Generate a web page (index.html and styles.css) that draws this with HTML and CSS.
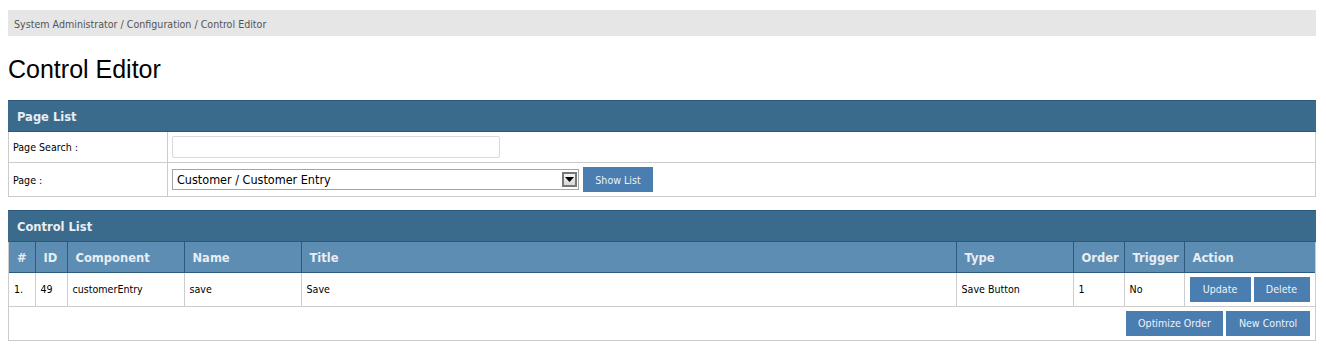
FILE: index.html
```html
<!DOCTYPE html>
<html lang="en">
<head>
    <meta charset="UTF-8">
    <title>Control Editor</title>
    <link rel="stylesheet" href="styles.css">
</head>
<body>
    <div class="breadcrumb">System Administrator / Configuration / Control Editor</div>
    <h1>Control Editor</h1>

    <div class="panel">
        <div class="panel-title">Page List</div>
        <table class="form-table">
            <tr class="row-search">
                <td class="label">Page Search :</td>
                <td><input type="text" class="search-input"></td>
            </tr>
            <tr class="row-page">
                <td class="label">Page :</td>
                <td>
                    <div class="page-pick">
                        <div class="select-box">
                            <span class="select-text">Customer / Customer Entry</span>
                            <span class="select-arrow"><svg width="9" height="5" viewBox="0 0 9 5"><path d="M0 0h9L4.5 5z" fill="#000"/></svg></span>
                        </div>
                        <button class="btn btn-show">Show List</button>
                    </div>
                </td>
            </tr>
        </table>
    </div>

    <div class="panel">
        <div class="panel-title">Control List</div>
        <table class="list-table">
            <colgroup>
                <col class="c-no">
                <col class="c-id">
                <col class="c-comp">
                <col class="c-name">
                <col>
                <col class="c-type">
                <col class="c-order">
                <col class="c-trigger">
                <col class="c-action">
            </colgroup>
            <thead>
                <tr>
                    <th>#</th>
                    <th>ID</th>
                    <th>Component</th>
                    <th>Name</th>
                    <th>Title</th>
                    <th>Type</th>
                    <th>Order</th>
                    <th>Trigger</th>
                    <th>Action</th>
                </tr>
            </thead>
            <tbody>
                <tr>
                    <td>1.</td>
                    <td>49</td>
                    <td>customerEntry</td>
                    <td>save</td>
                    <td>Save</td>
                    <td>Save Button</td>
                    <td>1</td>
                    <td>No</td>
                    <td class="actions"><button class="btn btn-update">Update</button><button class="btn btn-delete">Delete</button></td>
                </tr>
                <tr class="footer-row">
                    <td colspan="9"><button class="btn btn-optimize">Optimize Order</button><button class="btn btn-new">New Control</button></td>
                </tr>
            </tbody>
        </table>
    </div>
</body>
</html>
```

FILE: styles.css
```css
body {
    font-family: "DejaVu Sans Condensed", "DejaVu Sans", sans-serif;
    font-size: 10.6px;
    color: #000;
    background-color: #fff;
    margin: 0;
    padding: 10px 10px 0 8px;
}
.breadcrumb {
    background-color: #e6e6e6;
    color: #555;
    height: 26px;
    line-height: 28px;
    padding-left: 6px;
}
h1 {
    font-family: "Liberation Sans", Arial, sans-serif;
    font-weight: normal;
    font-size: 25px;
    margin: 18px 0 16px 0;
    line-height: 30px;
}
.panel {
    border: 1px solid #ccc;
    border-top: 0;
    margin-bottom: 13px;
}
.panel-title {
    background-color: #3b6b8c;
    border-top: 1px solid #2b5a7e;
    border-bottom: 1px solid #2b5a7e;
    margin: 0 -1px;
    color: #e8eef3;
    font-family: "DejaVu Sans", sans-serif;
    font-weight: bold;
    font-size: 11.5px;
    height: 30px;
    line-height: 32px;
    padding-left: 9px;
}
table {
    width: 100%;
    border-collapse: collapse;
}
.form-table td {
    border-top: 1px solid #ccc;
    padding: 0 4px;
    vertical-align: middle;
}
.form-table tr:first-child td {
    border-top: 0;
}
.form-table .label {
    width: 150px;
    border-right: 1px solid #ccc;
}
.row-search td {
    height: 30px;
}
.row-page td {
    height: 33px;
}
.search-input {
    display: block;
    width: 328px;
    height: 22px;
    box-sizing: border-box;
    border: 1px solid #d7dbe0;
    border-radius: 2px;
    margin: 0;
    padding: 0;
}
.page-pick {
    display: flex;
    align-items: center;
    gap: 4px;
}
.select-box {
    display: flex;
    align-items: center;
    width: 407px;
    height: 21px;
    box-sizing: border-box;
    border: 1px solid #a5a5a5;
    font-size: 12.5px;
}
.select-text {
    flex: 1;
    padding-left: 4px;
}
.select-arrow {
    width: 15px;
    height: 15px;
    margin-right: 1px;
    box-sizing: border-box;
    border: 2px solid #777;
    background: linear-gradient(#f4f4f4, #d8d8d8);
    display: flex;
    align-items: center;
    justify-content: center;
}
.btn {
    display: inline-block;
    vertical-align: middle;
    background-color: #4a7db0;
    color: #eef3f8;
    border: 0;
    font-family: "DejaVu Sans Condensed", "DejaVu Sans", sans-serif;
    font-size: 10.6px;
    height: 25px;
    padding: 0;
    margin: 0;
}
.btn-show { width: 70px; }
.list-table {
    table-layout: fixed;
}
.c-no { width: 26px; }
.c-id { width: 32px; }
.c-comp { width: 117px; }
.c-name { width: 117px; }
.c-type { width: 117px; }
.c-order { width: 51px; }
.c-trigger { width: 60px; }
.c-action { width: 131px; }
.list-table th {
    background-color: #5e8db3;
    color: #e8eef3;
    font-family: "DejaVu Sans", sans-serif;
    font-size: 11.5px;
    font-weight: bold;
    text-align: left;
    height: 30px;
    padding: 2px 8px 0 8px;
    border-left: 1px solid #2b5a7e;
    border-bottom: 1px solid #2b5a7e;
    box-sizing: border-box;
    white-space: nowrap;
}
.list-table th:first-child {
    border-left: 0;
}
.list-table td {
    height: 34px;
    box-sizing: border-box;
    padding: 0 4px 0 5px;
    border-left: 1px solid #ccc;
    border-bottom: 1px solid #ccc;
}
.list-table td:first-child {
    border-left: 0;
}
.list-table .footer-row td {
    border-bottom: 0;
    text-align: right;
    padding-right: 5px;
}
.actions {
    white-space: nowrap;
}
.actions .btn + .btn,
.footer-row .btn + .btn {
    margin-left: 3px;
}
.btn-update { width: 61px; }
.btn-delete { width: 56px; }
.btn-optimize { width: 97px; }
.btn-new { width: 84px; margin-left: 4px; }
```
